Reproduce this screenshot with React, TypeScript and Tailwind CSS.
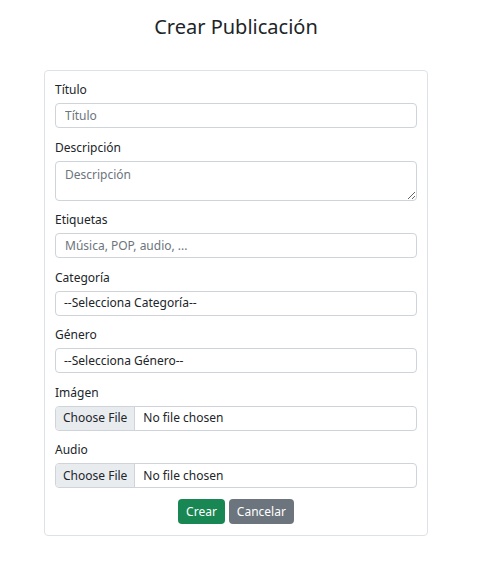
import React from "react";

const font = { fontFamily: '"Noto Sans", "Open Sans", sans-serif' };

function Label({ children }: { children: React.ReactNode }) {
  return <label className="block text-[12px] leading-[18px] text-[#212529] mb-[4px]">{children}</label>;
}

function FileInput() {
  return (
    <div className="flex h-[25px] w-full border border-[#ced4da] rounded-[4px] overflow-hidden text-[12px] text-[#212529]">
      <span className="flex items-center px-[7px] bg-[#e9ecef] border-r border-[#ced4da]">Choose File</span>
      <span className="flex items-center px-[8px]">No file chosen</span>
    </div>
  );
}

export default function App() {
  return (
    <div className="w-[472px] bg-white pb-[30px]" style={font}>
      <h3 className="text-center text-[20px] leading-[26px] text-[#212529] pt-[14px] mb-[30px]">Crear Publicación</h3>
      <div className="ml-[44px] w-[384px] border border-[#dee2e6] rounded-[4px] px-[10px] pt-[10px] pb-[11px]">
        <div className="mb-[10.5px]">
          <Label>Título</Label>
          <input
            className="block w-full h-[25px] px-[9px] border border-[#ced4da] rounded-[4px] text-[12px] text-[#212529] placeholder:text-[#6c757d] outline-none"
            placeholder="Título"
          />
        </div>
        <div className="mb-[10.5px]">
          <Label>Descripción</Label>
          <textarea
            className="block w-full h-[40px] px-[9px] py-[4px] border border-[#ced4da] rounded-[4px] text-[12px] leading-[18px] text-[#212529] placeholder:text-[#6c757d] outline-none"
            placeholder="Descripción"
          />
        </div>
        <div className="mb-[10.5px]">
          <Label>Etiquetas</Label>
          <input
            className="block w-full h-[25px] px-[9px] border border-[#ced4da] rounded-[4px] text-[12px] text-[#212529] placeholder:text-[#6c757d] outline-none"
            placeholder="Música, POP, audio, ..."
          />
        </div>
        <div className="mb-[10.5px]">
          <Label>Categoría</Label>
          <select className="block w-full h-[25px] px-[8px] border border-[#ced4da] rounded-[4px] text-[12px] text-[#212529] bg-white appearance-none outline-none">
            <option>--Selecciona Categoría--</option>
          </select>
        </div>
        <div className="mb-[10.5px]">
          <Label>Género</Label>
          <select className="block w-full h-[25px] px-[8px] border border-[#ced4da] rounded-[4px] text-[12px] text-[#212529] bg-white appearance-none outline-none">
            <option>--Selecciona Género--</option>
          </select>
        </div>
        <div className="mb-[10.5px]">
          <Label>Imágen</Label>
          <FileInput />
        </div>
        <div className="mb-[11px]">
          <Label>Audio</Label>
          <FileInput />
        </div>
        <div className="flex justify-center gap-[4px]">
          <button className="h-[25px] px-[8px] rounded-[4px] bg-[#198754] text-white text-[12px]">Crear</button>
          <button className="h-[25px] px-[8px] rounded-[4px] bg-[#6c757d] text-white text-[12px]">Cancelar</button>
        </div>
      </div>
    </div>
  );
}
